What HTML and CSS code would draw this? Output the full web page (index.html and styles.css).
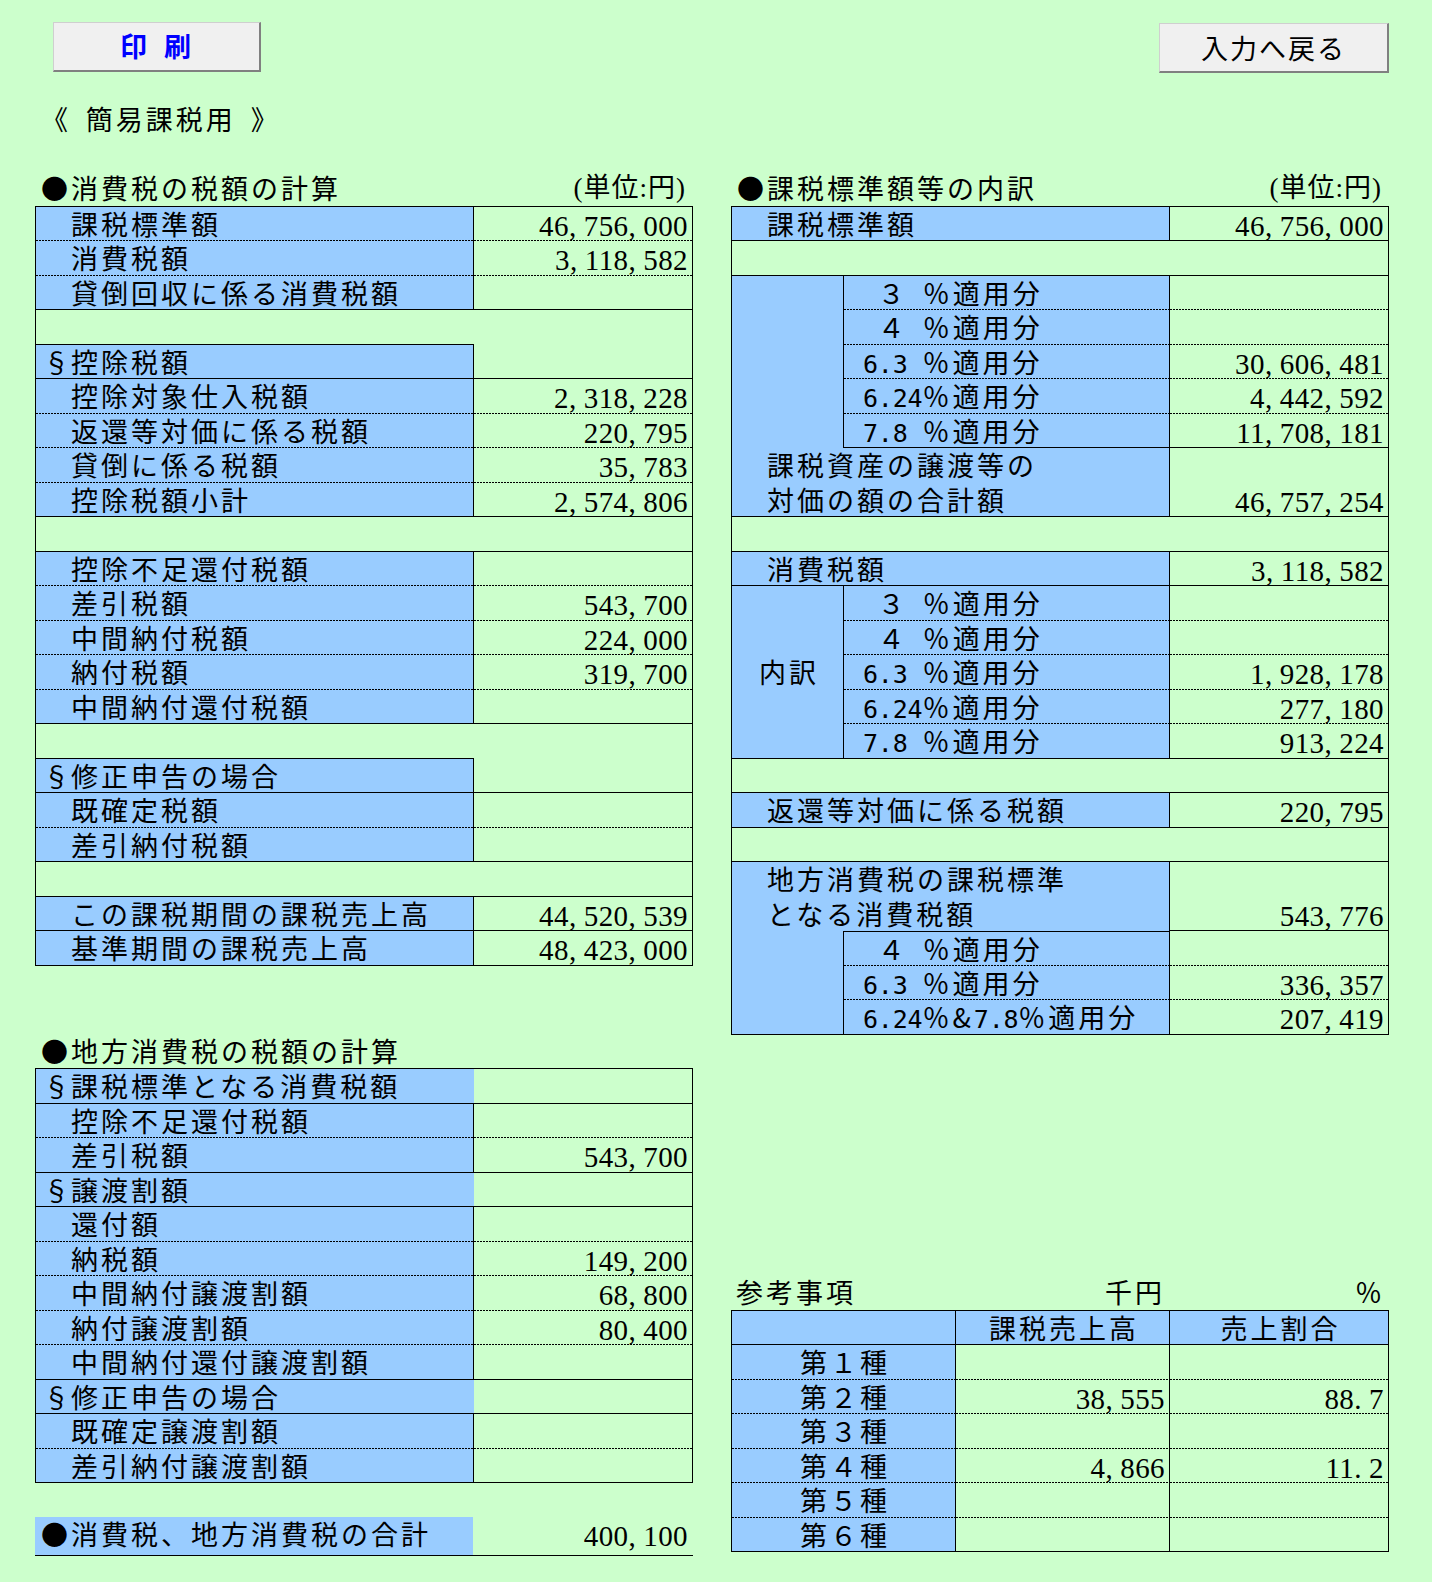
FILE: index.html
```html
<!DOCTYPE html>
<html lang="ja">
<head>
<meta charset="utf-8">
<title>簡易課税用</title>
<link rel="stylesheet" href="styles.css">
</head>
<body>
<div class="page">
  <header class="topbar">
    <button class="btn btn-print">印<span class="hw"> </span>刷</button>
    <button class="btn btn-back">入力へ戻る</button>
  </header>

  <div class="title">《<span class="hw"> </span>簡易課税用<span class="hw"> </span>》</div>

  <main class="cols">
    <section class="col">
      <div class="sec-head"><span>●消費税の税額の計算</span><span class="unit">(単位:円)</span></div>
      <div class="grid g-left">
        <div class="cell blue lbl br bd">課税標準額</div><div class="cell num br bd">46<span class="cm">,</span>756<span class="cm">,</span>000</div>
        <div class="cell blue lbl br bd">消費税額</div><div class="cell num br bd">3<span class="cm">,</span>118<span class="cm">,</span>582</div>
        <div class="cell blue lbl br bs">貸倒回収に係る消費税額</div><div class="cell num br bs"></div>
        <div class="cell bs"></div><div class="cell br"></div>
        <div class="cell blue sect br bs"><span class="mark">§</span>控除税額</div><div class="cell num br bs"></div>
        <div class="cell blue lbl br bd">控除対象仕入税額</div><div class="cell num br bd">2<span class="cm">,</span>318<span class="cm">,</span>228</div>
        <div class="cell blue lbl br bd">返還等対価に係る税額</div><div class="cell num br bd">220<span class="cm">,</span>795</div>
        <div class="cell blue lbl br bd">貸倒に係る税額</div><div class="cell num br bd">35<span class="cm">,</span>783</div>
        <div class="cell blue lbl br bs">控除税額小計</div><div class="cell num br bs">2<span class="cm">,</span>574<span class="cm">,</span>806</div>
        <div class="cell all br bs"></div>
        <div class="cell blue lbl br bd">控除不足還付税額</div><div class="cell num br bd"></div>
        <div class="cell blue lbl br bd">差引税額</div><div class="cell num br bd">543<span class="cm">,</span>700</div>
        <div class="cell blue lbl br bd">中間納付税額</div><div class="cell num br bd">224<span class="cm">,</span>000</div>
        <div class="cell blue lbl br bd">納付税額</div><div class="cell num br bd">319<span class="cm">,</span>700</div>
        <div class="cell blue lbl br bs">中間納付還付税額</div><div class="cell num br bs"></div>
        <div class="cell bs"></div><div class="cell br"></div>
        <div class="cell blue sect br bs"><span class="mark">§</span>修正申告の場合</div><div class="cell num br bs"></div>
        <div class="cell blue lbl br bd">既確定税額</div><div class="cell num br bd"></div>
        <div class="cell blue lbl br bs">差引納付税額</div><div class="cell num br bs"></div>
        <div class="cell all br bs"></div>
        <div class="cell blue lbl br bs">この課税期間の課税売上高</div><div class="cell num br bs">44<span class="cm">,</span>520<span class="cm">,</span>539</div>
        <div class="cell blue lbl br bs">基準期間の課税売上高</div><div class="cell num br bs">48<span class="cm">,</span>423<span class="cm">,</span>000</div>
      </div>

      <div class="sec-head gap-local"><span>●地方消費税の税額の計算</span></div>
      <div class="grid g-left">
        <div class="cell blue sect bs"><span class="mark">§</span>課税標準となる消費税額</div><div class="cell num br bs"></div>
        <div class="cell blue lbl br bd">控除不足還付税額</div><div class="cell num br bd"></div>
        <div class="cell blue lbl br bs">差引税額</div><div class="cell num br bs">543<span class="cm">,</span>700</div>
        <div class="cell blue sect bs"><span class="mark">§</span>譲渡割額</div><div class="cell num br bs"></div>
        <div class="cell blue lbl br bd">還付額</div><div class="cell num br bd"></div>
        <div class="cell blue lbl br bd">納税額</div><div class="cell num br bd">149<span class="cm">,</span>200</div>
        <div class="cell blue lbl br bd">中間納付譲渡割額</div><div class="cell num br bd">68<span class="cm">,</span>800</div>
        <div class="cell blue lbl br bd">納付譲渡割額</div><div class="cell num br bd">80<span class="cm">,</span>400</div>
        <div class="cell blue lbl br bs">中間納付還付譲渡割額</div><div class="cell num br bs"></div>
        <div class="cell blue sect bs"><span class="mark">§</span>修正申告の場合</div><div class="cell num br bs"></div>
        <div class="cell blue lbl br bd">既確定譲渡割額</div><div class="cell num br bd"></div>
        <div class="cell blue lbl br bs">差引納付譲渡割額</div><div class="cell num br bs"></div>
      </div>

      <div class="total">
        <div class="cell blue total-lbl bs">●消費税、地方消費税の合計</div>
        <div class="cell num total-num bs">400<span class="cm">,</span>100</div>
      </div>
    </section>

    <section class="col">
      <div class="sec-head"><span>●課税標準額等の内訳</span><span class="unit">(単位:円)</span></div>
      <div class="grid g-right">
        <div class="cell blue lbl c12 br bs">課税標準額</div><div class="cell num br bs">46<span class="cm">,</span>756<span class="cm">,</span>000</div>
        <div class="cell all br bs"></div>

        <div class="cell blue br rows5"></div>
        <div class="cell blue pct br bd"><span class="hw"> </span>３<span class="hw"> </span>％適用分</div><div class="cell num br bd"></div>
        <div class="cell blue pct br bd"><span class="hw"> </span>４<span class="hw"> </span>％適用分</div><div class="cell num br bd"></div>
        <div class="cell blue pct br bd"><span class="hw">6.3 </span>％適用分</div><div class="cell num br bd">30<span class="cm">,</span>606<span class="cm">,</span>481</div>
        <div class="cell blue pct br bd"><span class="hw">6.24</span>％適用分</div><div class="cell num br bd">4<span class="cm">,</span>442<span class="cm">,</span>592</div>
        <div class="cell blue pct br bs"><span class="hw">7.8 </span>％適用分</div><div class="cell num br bs">11<span class="cm">,</span>708<span class="cm">,</span>181</div>
        <div class="cell blue lbl c12 rows2 br bs">課税資産の譲渡等の<br>対価の額の合計額</div><div class="cell num rows2 down br bs">46<span class="cm">,</span>757<span class="cm">,</span>254</div>
        <div class="cell all br bs"></div>

        <div class="cell blue lbl c12 br bs">消費税額</div><div class="cell num br bs">3<span class="cm">,</span>118<span class="cm">,</span>582</div>
        <div class="cell blue rows5 mid br bs">内訳</div>
        <div class="cell blue pct br bd"><span class="hw"> </span>３<span class="hw"> </span>％適用分</div><div class="cell num br bd"></div>
        <div class="cell blue pct br bd"><span class="hw"> </span>４<span class="hw"> </span>％適用分</div><div class="cell num br bd"></div>
        <div class="cell blue pct br bd"><span class="hw">6.3 </span>％適用分</div><div class="cell num br bd">1<span class="cm">,</span>928<span class="cm">,</span>178</div>
        <div class="cell blue pct br bd"><span class="hw">6.24</span>％適用分</div><div class="cell num br bd">277<span class="cm">,</span>180</div>
        <div class="cell blue pct br bs"><span class="hw">7.8 </span>％適用分</div><div class="cell num br bs">913<span class="cm">,</span>224</div>
        <div class="cell all br bs"></div>

        <div class="cell blue lbl c12 br bs">返還等対価に係る税額</div><div class="cell num br bs">220<span class="cm">,</span>795</div>
        <div class="cell all br bs"></div>

        <div class="cell blue lbl c12 rows2 br">地方消費税の課税標準<br>となる消費税額</div><div class="cell num rows2 down br bs">543<span class="cm">,</span>776</div>
        <div class="cell blue rows3 br bs"></div>
        <div class="cell blue pct br bt bd"><span class="hw"> </span>４<span class="hw"> </span>％適用分</div><div class="cell num br bd"></div>
        <div class="cell blue pct br bd"><span class="hw">6.3 </span>％適用分</div><div class="cell num br bd">336<span class="cm">,</span>357</div>
        <div class="cell blue pct br bs"><span class="hw">6.24</span>％&amp;<span class="hw">7.8</span>％適用分</div><div class="cell num br bs">207<span class="cm">,</span>419</div>
      </div>

      <div class="ref-head gap-ref">
        <span class="rh-title">参考事項</span>
        <span class="rh-unit">千円</span>
        <span class="rh-pct">％</span>
      </div>
      <div class="grid g-ref">
        <div class="cell blue br bs"></div><div class="cell blue ctr br bs">課税売上高</div><div class="cell blue ctr br bs">売上割合</div>
        <div class="cell blue ctr br bd">第１種</div><div class="cell num br bd"></div><div class="cell num br bd"></div>
        <div class="cell blue ctr br bd">第２種</div><div class="cell num br bd">38<span class="cm">,</span>555</div><div class="cell num br bd">88<span class="cm">.</span>7</div>
        <div class="cell blue ctr br bd">第３種</div><div class="cell num br bd"></div><div class="cell num br bd"></div>
        <div class="cell blue ctr br bd">第４種</div><div class="cell num br bd">4<span class="cm">,</span>866</div><div class="cell num br bd">11<span class="cm">.</span>2</div>
        <div class="cell blue ctr br bd">第５種</div><div class="cell num br bd"></div><div class="cell num br bd"></div>
        <div class="cell blue ctr br bs">第６種</div><div class="cell num br bs"></div><div class="cell num br bs"></div>
      </div>
    </section>
  </main>
</div>
</body>
</html>
```

FILE: styles.css
```css
* { box-sizing: border-box; }

html, body {
  margin: 0;
  padding: 0;
}

body {
  background: #ccffcc;
  color: #000;
  font-family: "Noto Sans CJK JP", "Noto Sans", sans-serif;
  font-size: 27px;
  letter-spacing: 3px;
  width: 1432px;
  min-height: 1582px;
}

/* ---------- top bar ---------- */
.topbar {
  height: 102px;
  display: flex;
  justify-content: space-between;
  align-items: flex-start;
}

.btn {
  font-family: "Noto Sans CJK JP", sans-serif;
  font-size: 27px;
  letter-spacing: 2px;
  line-height: 1;
  padding: 0;
  color: #000;
  background: #f0f0f0;
  border: 1px solid #cfcfcf;
  border-right: 2px solid #808080;
  border-bottom: 2px solid #808080;
}

.btn-print {
  margin: 22px 0 0 53px;
  width: 208px;
  height: 50px;
  color: #0000ff;
  font-weight: 700;
}

.btn-back {
  margin: 23px 43px 0 0;
  width: 230px;
  height: 50px;
}

/* ---------- title ---------- */
.title {
  height: 34.5px;
  line-height: 34.5px;
  margin: 0 0 34.5px 35px;
  padding-left: 6px;
  white-space: nowrap;
}

/* ---------- two columns ---------- */
.cols {
  display: grid;
  grid-template-columns: 658px 658px;
  column-gap: 38px;
  margin-left: 35px;
  align-items: start;
}

.col {
  display: flex;
  flex-direction: column;
}

.sec-head {
  height: 34.5px;
  line-height: 34.5px;
  display: flex;
  justify-content: space-between;
  padding: 0 7px 0 6px;
  white-space: nowrap;
}

.gap-local { margin-top: 68px; }
.gap-ref { margin-top: 240.5px; }

.unit {
  font-family: "Liberation Serif", "Noto Sans CJK JP", serif;
  letter-spacing: 1px;
}

/* ---------- grids (spreadsheet tables) ---------- */
.grid {
  display: grid;
  grid-auto-rows: 34.5px;
  border-top: 1px solid #000;
  border-left: 1px solid #000;
}

.g-left { grid-template-columns: 438px 219px; }
.g-right { grid-template-columns: 112px 326px 219px; }
.g-ref { grid-template-columns: 224px 214px 219px; }

.cell {
  line-height: 34.5px;
  white-space: nowrap;
  min-width: 0;
}

.blue { background-color: #99ccff; }
.br { border-right: 1px solid #000; }
.bs { border-bottom: 1px solid #000; }
.bt { border-top: 1px solid #000; }
.bd {
  background-image: repeating-linear-gradient(90deg, #000 0 2px, transparent 2px 3px);
  background-size: 100% 1px;
  background-position: left bottom;
  background-repeat: no-repeat;
}

.lbl { padding-left: 35px; }
.sect { padding-left: 6px; }
.mark {
  display: inline-block;
  width: 29px;
  text-align: center;
  letter-spacing: 0;
}
.pct { padding-left: 19px; }

.num {
  font-family: "Liberation Serif", "Times New Roman", serif;
  font-size: 29px;
  letter-spacing: 0.4px;
  line-height: 38px;
  text-align: right;
  padding-right: 4px;
}

.cm { letter-spacing: 7.6px; }

.all { grid-column: 1 / -1; }
.c12 { grid-column: span 2; }
.rows2 { grid-row: span 2; }
.rows3 { grid-row: span 3; }
.rows5 { grid-row: span 5; }
.down { padding-top: 34.5px; }
.mid {
  padding-top: 69px;
  padding-left: 3px;
  text-align: center;
}
.ctr {
  text-align: center;
  padding-left: 3px;
}

/* half-width (monospaced) characters: 14.85px advance */
.hw {
  font-family: "DejaVu Sans Mono", monospace;
  font-size: 25px;
  line-height: 1;
  letter-spacing: -0.2px;
  white-space: pre;
}

/* ---------- total row ---------- */
.total {
  display: grid;
  grid-template-columns: 438px 220px;
  height: 34.5px;
  margin-top: 33.5px;
}

.total-lbl { padding-left: 6px; }
.total-num { padding-right: 5px; }

/* ---------- reference heading ---------- */
.ref-head {
  display: grid;
  grid-template-columns: 225px 214px 219px;
  height: 34.5px;
  line-height: 34.5px;
  white-space: nowrap;
}

.rh-title { padding-left: 5px; }
.rh-unit { text-align: right; padding-right: 5px; }
.rh-pct { text-align: right; padding-right: 4px; }
```
